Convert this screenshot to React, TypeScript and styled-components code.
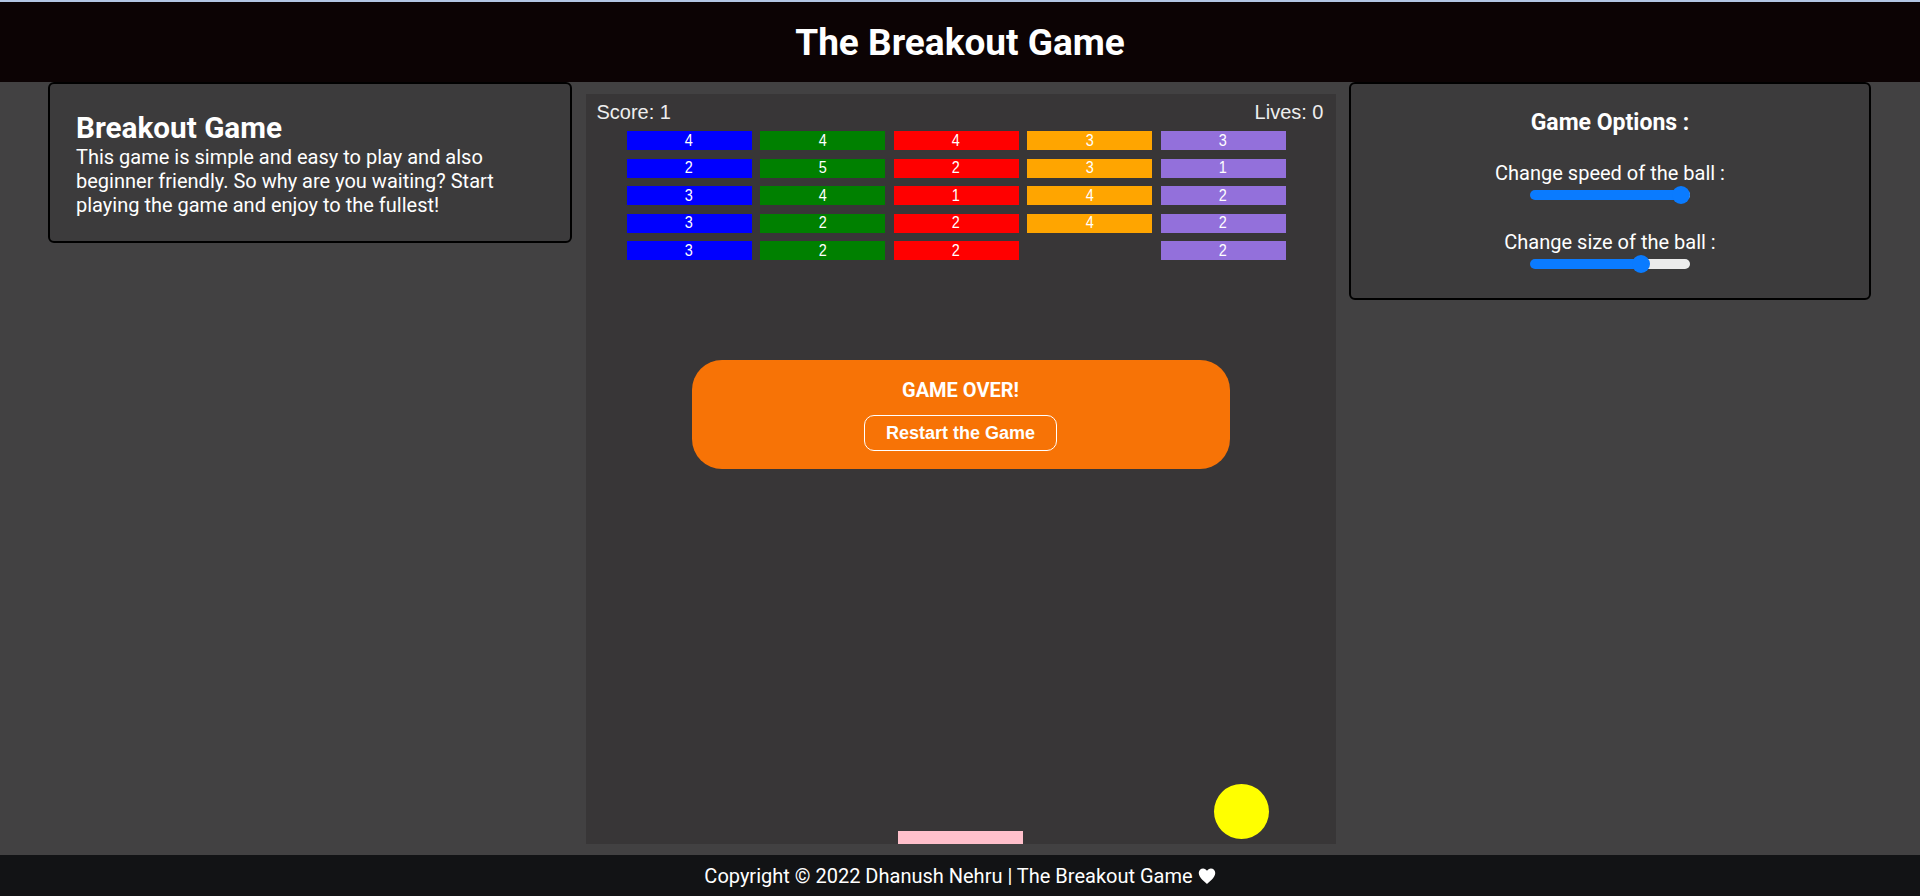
import React from "react";
import styled, { createGlobalStyle } from "styled-components";

const GlobalStyle = createGlobalStyle`
  html, body { margin: 0; padding: 0; }
  body {
    background: #424142;
    font-family: Roboto, "Noto Sans", "Liberation Sans", sans-serif;
    color: #fff;
    overflow: hidden;
  }
  * { box-sizing: border-box; }
`;

const Page = styled.div`
  display: flex;
  flex-direction: column;
  min-height: 100vh;
`;

const Header = styled.header`
  height: 82px;
  border-top: 2px solid #b3c6e4;
  background: #0c0304;
  display: flex;
  align-items: center;
  justify-content: center;
`;

const Title = styled.h1`
  margin: 0;
  font-size: 37px;
  font-weight: 700;
  color: #fff;
`;

const Main = styled.main`
  display: grid;
  grid-template-columns: 524px 1fr 522px;
  align-items: start;
  padding: 0 49px 0 48px;
`;

const Card = styled.section<{ $center?: boolean }>`
  background: #3c3b3c;
  border: 2px solid #000;
  border-radius: 6px;
  text-align: ${(p) => (p.$center ? "center" : "left")};
`;

const InfoCard = styled(Card)`
  padding: 26px 26px 24px;
`;

const OptionsCard = styled(Card)`
  padding: 25px 20px 25px;
`;

const InfoTitle = styled.h2`
  margin: 0;
  font-size: 29.7px;
  font-weight: 700;
  line-height: normal;
`;

const InfoText = styled.p`
  margin: 0;
  font-size: 20px;
  line-height: 24px;
`;

const OptionsTitle = styled.h3`
  margin: 0 0 25px;
  font-size: 23px;
  font-weight: 700;
  line-height: normal;
`;

const OptionGroup = styled.div`
  display: flex;
  flex-direction: column;
  align-items: center;
  gap: 1px;
  & + & {
    margin-top: 26px;
  }
`;

const OptionLabel = styled.label`
  font-size: 20px;
  line-height: normal;
`;

const Range = styled.input.attrs({ type: "range" })`
  -webkit-appearance: none;
  appearance: none;
  display: block;
  width: 160px;
  height: 18px;
  margin: 0;
  background: transparent;
  cursor: pointer;

  &::-webkit-slider-runnable-track {
    height: 10px;
    border-radius: 5px;
    background: linear-gradient(
      to right,
      #0a7bff var(--fill),
      #ececec var(--fill)
    );
  }
  &::-webkit-slider-thumb {
    -webkit-appearance: none;
    appearance: none;
    width: 18px;
    height: 18px;
    margin-top: -4px;
    border-radius: 50%;
    border: none;
    background: #0a7bff;
  }
`;

const CenterColumn = styled.div`
  display: flex;
  justify-content: center;
`;

const Canvas = styled.div`
  position: relative;
  width: 750px;
  height: 750px;
  margin: 12px 0 11px;
  background: #383637;
  overflow: hidden;
  font-family: "Liberation Sans", Arial, sans-serif;
`;

const Hud = styled.div`
  display: flex;
  justify-content: space-between;
  padding: 8px 12px 0 11px;
  font-size: 20px;
  line-height: 20px;
  color: #eeeeee;
`;

const BrickGrid = styled.div`
  display: grid;
  grid-template-columns: repeat(5, 125px);
  grid-auto-rows: 19px;
  column-gap: 8.5px;
  row-gap: 8.5px;
  margin: 9px 0 0 41px;
`;

const Brick = styled.div<{ $color: string }>`
  background: ${(p) => p.$color};
  color: #fff;
  font-size: 17px;
  display: flex;
  align-items: center;
  justify-content: center;
`;

const BrickNumber = styled.span`
  display: inline-block;
  transform: scaleX(0.85);
`;

const Paddle = styled.div`
  position: absolute;
  left: 312px;
  bottom: 0;
  width: 125px;
  height: 13px;
  background: #ffc0cb;
`;

const Ball = styled.div`
  position: absolute;
  left: 628px;
  top: 690px;
  width: 55px;
  height: 55px;
  border-radius: 50%;
  background: #ffff00;
`;

const Overlay = styled.div`
  position: absolute;
  left: 106px;
  top: 266px;
  width: 538px;
  height: 109px;
  border-radius: 30px;
  background: #f77306;
  display: flex;
  flex-direction: column;
  align-items: center;
  padding-top: 17px;
`;

const OverlayTitle = styled.div`
  font-family: Roboto, sans-serif;
  font-size: 20px;
  font-weight: 700;
  line-height: 26px;
  color: #fff;
`;

const RestartButton = styled.button`
  margin-top: 12px;
  height: 36px;
  padding: 0 21px;
  border: 1px solid #fff;
  border-radius: 10px;
  background: transparent;
  color: #fff;
  font-family: "Liberation Sans", Arial, sans-serif;
  font-size: 18px;
  font-weight: 700;
  cursor: pointer;
`;

const Footer = styled.footer`
  height: 41px;
  background: #121315;
  display: flex;
  align-items: center;
  justify-content: center;
  gap: 5px;
  font-size: 20px;
  color: #fff;
`;

const COLORS = ["#0000ff", "#008000", "#ff0000", "#ffa500", "#9370db"];
const BRICKS: (number | null)[][] = [
  [4, 4, 4, 3, 3],
  [2, 5, 2, 3, 1],
  [3, 4, 1, 4, 2],
  [3, 2, 2, 4, 2],
  [3, 2, 2, null, 2],
];

const Slider: React.FC<{ value: number; label: string }> = ({ value, label }) => {
  const [v, setV] = React.useState(value);
  const fill = ((9 + (v / 100) * 142) / 160) * 100;
  return (
    <OptionGroup>
      <OptionLabel>{label}</OptionLabel>
      <Range
        min={0}
        max={100}
        value={v}
        onChange={(e) => setV(Number(e.target.value))}
        style={{ ["--fill" as any]: `${fill}%` }}
      />
    </OptionGroup>
  );
};

const Heart = () => (
  <svg width="18" height="16" viewBox="0 0 24 21" aria-hidden="true">
    <path
      d="M12 21 C10 19 1 13 1 6.5 C1 3 3.6 0.5 6.8 0.5 C9 0.5 11 1.8 12 3.6 C13 1.8 15 0.5 17.2 0.5 C20.4 0.5 23 3 23 6.5 C23 13 14 19 12 21 Z"
      fill="#fff"
    />
  </svg>
);

export default function App() {
  return (
    <>
      <GlobalStyle />
      <Page>
        <Header>
          <Title>The Breakout Game</Title>
        </Header>
        <Main>
          <InfoCard>
            <InfoTitle>Breakout Game</InfoTitle>
            <InfoText>
              This game is simple and easy to play and also beginner friendly. So why are you
              waiting? Start playing the game and enjoy to the fullest!
            </InfoText>
          </InfoCard>
          <CenterColumn>
            <Canvas>
              <Hud>
                <span>Score: 1</span>
                <span>Lives: 0</span>
              </Hud>
              <BrickGrid>
                {BRICKS.map((row, r) =>
                  row.map((n, c) => (
                    <Brick key={`${r}-${c}`} $color={n === null ? "transparent" : COLORS[c]}>
                      {n !== null && <BrickNumber>{n}</BrickNumber>}
                    </Brick>
                  ))
                )}
              </BrickGrid>
              <Overlay>
                <OverlayTitle>GAME OVER!</OverlayTitle>
                <RestartButton>Restart the Game</RestartButton>
              </Overlay>
              <Ball />
              <Paddle />
            </Canvas>
          </CenterColumn>
          <OptionsCard $center>
            <OptionsTitle>Game Options :</OptionsTitle>
            <Slider label="Change speed of the ball :" value={100} />
            <Slider label="Change size of the ball :" value={72} />
          </OptionsCard>
        </Main>
        <Footer>
          <span>Copyright © 2022 Dhanush Nehru | The Breakout Game</span>
          <Heart />
        </Footer>
      </Page>
    </>
  );
}
